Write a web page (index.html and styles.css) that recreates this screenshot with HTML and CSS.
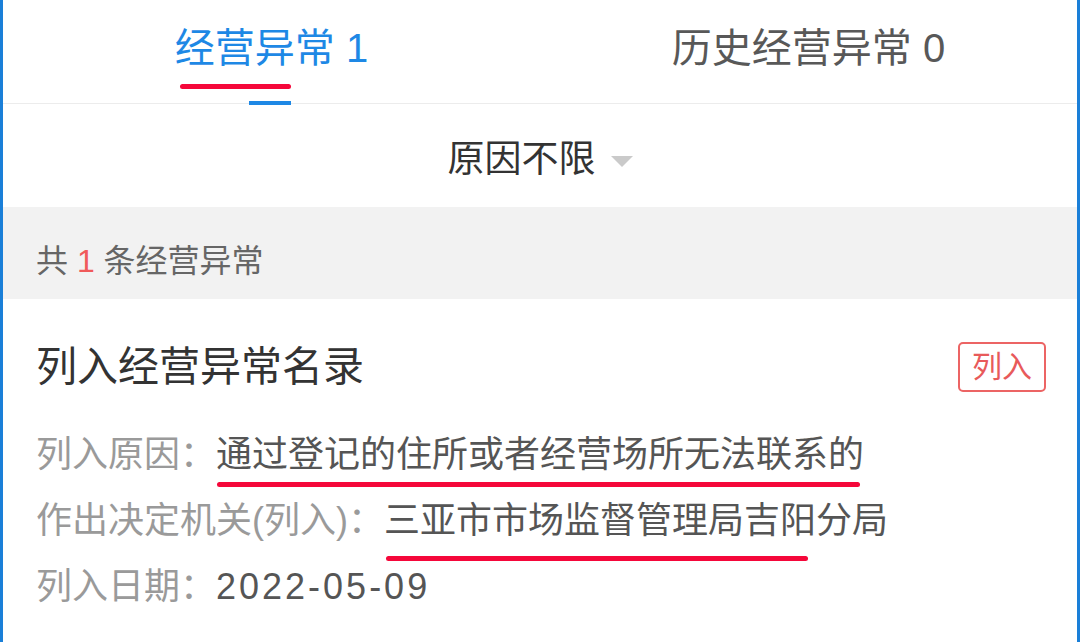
FILE: index.html
```html
<!DOCTYPE html>
<html lang="zh-CN">
<head>
<meta charset="utf-8">
<title>经营异常</title>
<link rel="stylesheet" href="styles.css">
</head>
<body>
<div class="page">
  <div class="tabs">
    <div class="tab tab-active">经营异常 1<span class="mark mark-tab"></span><span class="indicator"></span></div>
    <div class="tab">历史经营异常 0</div>
  </div>
  <div class="filter">
    <span class="filter-label">原因不限</span><span class="caret"></span>
  </div>
  <div class="summary">共 <span class="count">1</span> 条经营异常</div>
  <div class="card">
    <div class="card-head">
      <div class="card-title">列入经营异常名录</div>
      <div class="badge">列入</div>
    </div>
    <div class="row">
      <div class="label">列入原因：</div>
      <div class="value mark-under mark-1">通过登记的住所或者经营场所无法联系的</div>
    </div>
    <div class="row">
      <div class="label">作出决定机关(列入)：</div>
      <div class="value mark-under mark-2">三亚市市场监督管理局吉阳分局</div>
    </div>
    <div class="row">
      <div class="label">列入日期：</div>
      <div class="value date">2022-05-09</div>
    </div>
  </div>
</div>
</body>
</html>
```
FILE: styles.css
```css
* { box-sizing: border-box; }
html, body {
  margin: 0;
  padding: 0;
  background: #ffffff;
}
body {
  width: 1080px;
  height: 642px;
  overflow: hidden;
  font-family: "Liberation Sans", "Noto Sans CJK SC", sans-serif;
}
.page {
  width: 1080px;
  height: 642px;
  border-left: 3px solid #1a7fd8;
  border-right: 3px solid #1a7fd8;
  position: relative;
}
.tabs {
  display: flex;
  height: 104px;
  border-bottom: 1px solid #ececec;
}
.tab {
  flex: 1;
  text-align: center;
  font-size: 40px;
  line-height: 96px;
  color: #585858;
  position: relative;
}
.tab-active { color: #1e88e5; }
.indicator {
  position: absolute;
  left: 246px;
  top: 101px;
  width: 42px;
  height: 4px;
  background: #1e88e5;
}
.mark {
  position: absolute;
  height: 5px;
  border-radius: 3px;
  background: #f5073a;
}
.mark-tab {
  left: 177px;
  top: 84px;
  width: 111px;
}
.filter {
  height: 103px;
  padding-top: 8px;
  display: flex;
  justify-content: center;
  align-items: center;
  gap: 15px;
}
.filter-label {
  font-size: 37px;
  line-height: 95px;
  color: #333333;
}
.caret {
  width: 0;
  height: 0;
  border-left: 11px solid transparent;
  border-right: 11px solid transparent;
  border-top: 11px solid #cacaca;
  margin-top: 4px;
}
.summary {
  height: 92px;
  background: #f2f2f2;
  padding: 15px 0 0 33px;
  font-size: 32px;
  line-height: 78px;
  color: #666666;
}
.count { color: #f05a5a; }
.card {
  padding: 43px 31px 0 33px;
}
.card-head {
  display: flex;
  justify-content: space-between;
  align-items: center;
  height: 50px;
}
.card-title {
  font-size: 41px;
  line-height: 50px;
  color: #333333;
}
.badge {
  width: 88px;
  height: 50px;
  border: 2px solid #ec6464;
  border-radius: 5px;
  color: #e85a5a;
  font-size: 30px;
  line-height: 46px;
  text-align: center;
}
.row {
  display: flex;
  font-size: 36px;
  line-height: 66px;
}
.card-head + .row { margin-top: 30px; }
.label { color: #9a9a9a; white-space: nowrap; }
.value { color: #555555; white-space: nowrap; position: relative; }
.date { letter-spacing: 3px; }
.mark-under::after {
  content: "";
  position: absolute;
  height: 5px;
  border-radius: 3px;
  background: #f5073a;
}
.mark-1::after { left: 1px; width: 643px; top: 60px; }
.mark-2::after { left: 2px; width: 422px; top: 68px; }
```
